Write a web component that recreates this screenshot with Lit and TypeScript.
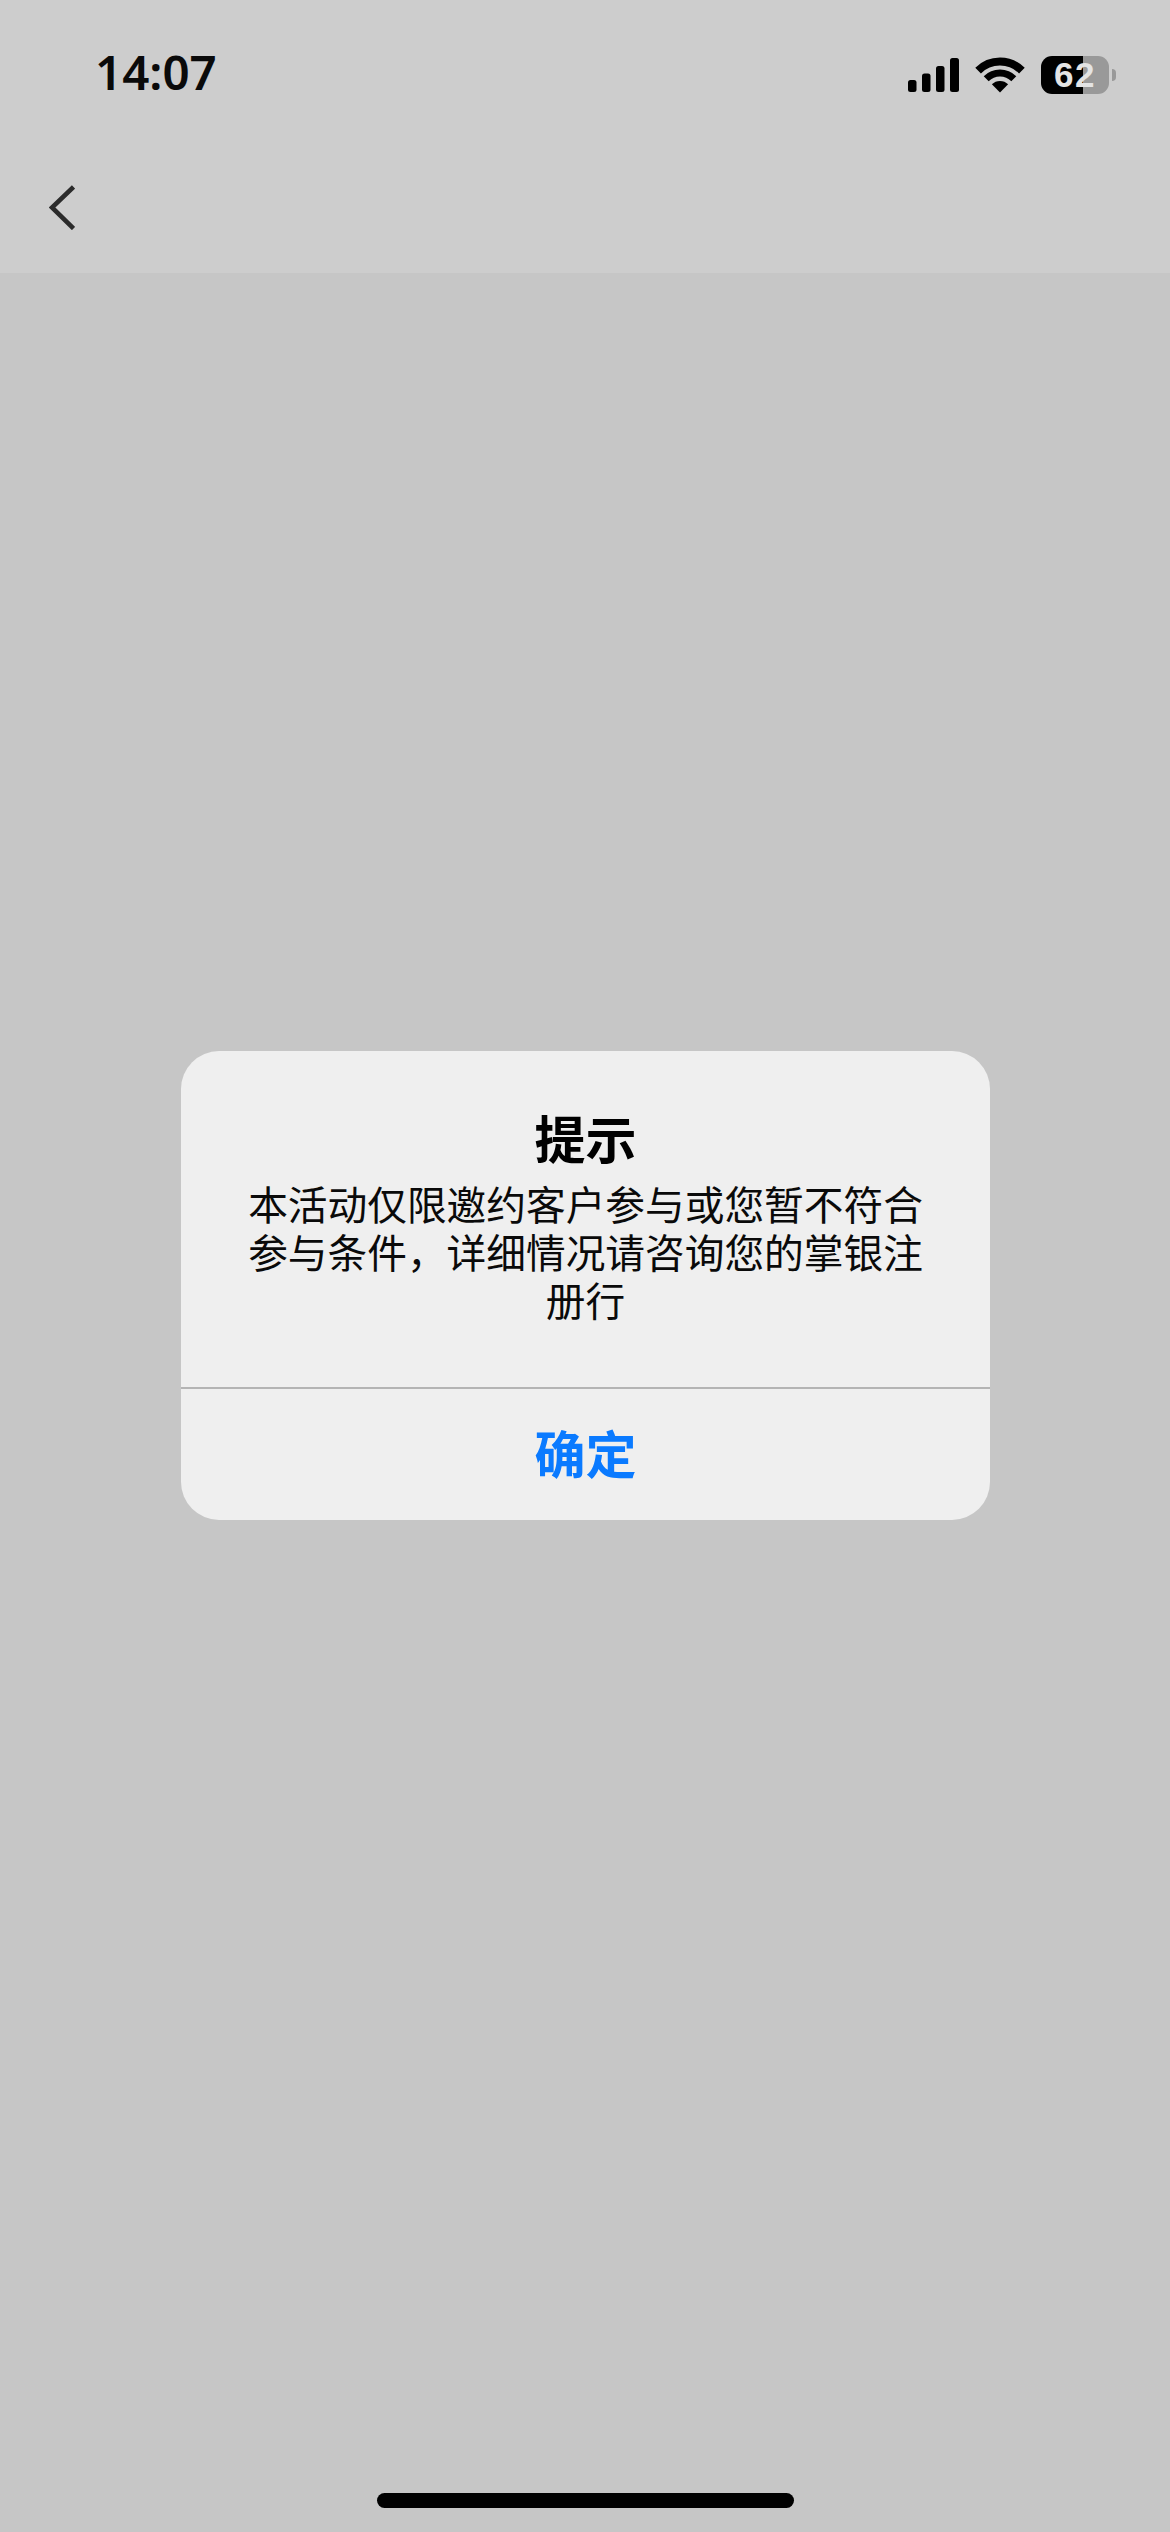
import { LitElement, html, css } from "lit";
import { customElement } from "lit/decorators.js";

@customElement("app-root")
export class AppRoot extends LitElement {
  static styles = css`
    :host {
      display: block;
      width: 1170px;
      height: 2532px;
      overflow: hidden;
      font-family: "Noto Sans CJK SC", "Noto Sans", sans-serif;
      color: #000;
    }
    .page {
      display: flex;
      flex-direction: column;
      height: 2532px;
      background: #c6c6c6;
    }
    .top {
      background: #cdcdcd;
      height: 273px;
      flex: none;
    }
    .status {
      height: 149px;
      box-sizing: border-box;
      padding: 0 54px 0 95px;
      display: flex;
      align-items: center;
      justify-content: space-between;
    }
    .time {
      font-family: "Noto Sans", sans-serif;
      font-size: 47.5px;
      font-weight: 600;
      line-height: 1;
      color: #0a0a0a;
      padding-bottom: 6px;
    }
    .icons {
      display: flex;
      align-items: center;
    }
    .signal { width: 51px; height: 34px; display: block; margin-right: 17px; }
    .wifi { width: 48px; height: 36px; display: block; margin-right: 17px; overflow: visible; }
    .battery {
      width: 68px;
      height: 38px;
      border-radius: 11px;
      background: linear-gradient(90deg, #000 0 42px, #999 42px 100%);
      display: flex;
      align-items: center;
      justify-content: center;
      font-family: "Liberation Sans", sans-serif;
      font-size: 35px;
      font-weight: 700;
      letter-spacing: 1.5px;
      line-height: 1;
      color: #e4e4e4;
    }
    .nub {
      width: 4px;
      height: 12px;
      margin-left: 3px;
      background: #999;
      border-radius: 0 6px 6px 0;
    }
    .nav {
      height: 124px;
      box-sizing: border-box;
      padding: 0 0 7px 49px;
      display: flex;
      align-items: center;
    }
    .back { width: 26px; height: 45px; display: block; }
    .main {
      flex: 1;
      padding: 778px 0 0 181px;
      display: flex;
      flex-direction: column;
      align-items: flex-start;
    }
    .dialog {
      width: 809px;
      height: 469px;
      background: #efefef;
      border-radius: 38px;
      overflow: hidden;
      display: flex;
      flex-direction: column;
      text-align: center;
    }
    .content {
      height: 336px;
      box-sizing: border-box;
      padding: 56px 48px 0;
    }
    .title {
      font-size: 51px;
      font-weight: 700;
      line-height: 60px;
      margin-bottom: 12px;
    }
    .body {
      font-size: 39.7px;
      font-weight: 400;
      line-height: 48px;
      color: #0a0a0a;
    }
    .rule {
      height: 2px;
      background: #b4b4b4;
      flex: none;
    }
    .action {
      flex: 1;
      box-sizing: border-box;
      padding-bottom: 6px;
      display: flex;
      align-items: center;
      justify-content: center;
      font-size: 51px;
      font-weight: 700;
      color: #0a7aff;
    }
    .home-area {
      flex: none;
      height: 39px;
      display: flex;
      justify-content: center;
    }
    .home {
      width: 417px;
      height: 15px;
      border-radius: 8px;
      background: #000;
    }
  `;

  render() {
    return html`
      <div class="page">
        <header class="top">
          <div class="status">
            <span class="time">14:07</span>
            <div class="icons">
              <svg class="signal" viewBox="0 0 51 34">
                <rect x="0" y="22" width="8.5" height="12" rx="2.5" />
                <rect x="14" y="15.5" width="8.5" height="18.5" rx="2.5" />
                <rect x="28" y="8" width="8.5" height="26" rx="2.5" />
                <rect x="42" y="0" width="9" height="34" rx="2.5" />
              </svg>
              <svg class="wifi" viewBox="0 0 48 36">
                <path d="M2.1 13.6A31 31 0 0 1 45.9 13.6" fill="none" stroke="#000" stroke-width="8" />
                <path d="M10.2 21.7A19.5 19.5 0 0 1 37.8 21.7" fill="none" stroke="#000" stroke-width="7" />
                <path d="M24 35.5L15.87 27.37A11.5 11.5 0 0 1 32.13 27.37Z" />
              </svg>
              <div class="battery">62</div>
              <div class="nub"></div>
            </div>
          </div>
          <div class="nav">
            <svg class="back" viewBox="0 0 26 45">
              <path d="M24.5 2L3 22.5L24.5 43.5" fill="none" stroke="#2b2b2b" stroke-width="4.6" />
            </svg>
          </div>
        </header>
        <main class="main">
          <div class="dialog">
            <div class="content">
              <div class="title">提示</div>
              <div class="body">本活动仅限邀约客户参与或您暂不符合参与条件，详细情况请咨询您的掌银注册行</div>
            </div>
            <div class="rule"></div>
            <div class="action">确定</div>
          </div>
        </main>
        <div class="home-area"><div class="home"></div></div>
      </div>
    `;
  }
}
